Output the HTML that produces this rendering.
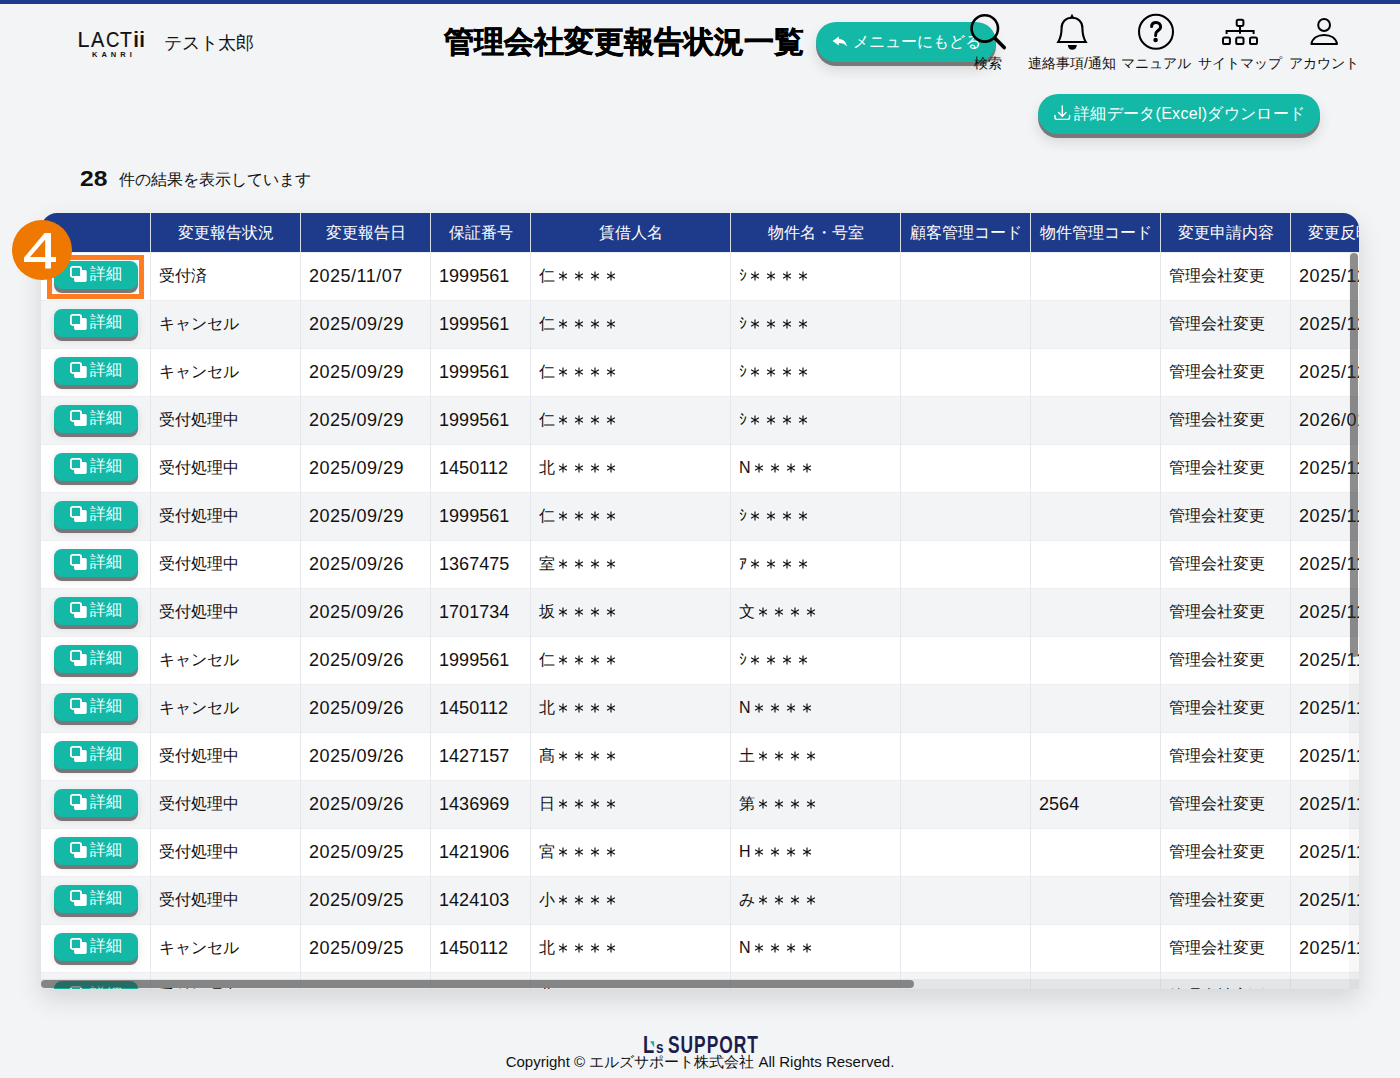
<!DOCTYPE html>
<html lang="ja">
<head>
<meta charset="utf-8">
<title>管理会社変更報告状況一覧</title>
<style>
*{box-sizing:border-box;margin:0;padding:0}
html,body{width:1400px;height:1078px;overflow:hidden}
body{position:relative;background:#f3f4f6;font-family:"Liberation Sans",sans-serif;color:#111}
.abs{position:absolute}
#topbar{left:0;top:0;width:1400px;height:4px;background:#1e3a8a}
#logo{left:79px;top:28px;font-size:21.5px;line-height:24px;color:#111;-webkit-text-stroke:0.2px #111}
#logo span{position:absolute;top:0;transform-origin:0 0}
#kanri{left:92px;top:49.5px;font-size:7.5px;font-weight:bold;letter-spacing:4px;line-height:9px;color:#111}
#uname{left:164px;top:31px;font-size:18px;line-height:24px;white-space:nowrap}
#title{left:444px;top:24px;font-size:30px;font-weight:bold;line-height:36px;white-space:nowrap;-webkit-text-stroke:0.5px #000;color:#000}
.gbtn{background:#14b8a6;color:#fff;border-radius:20px;box-shadow:0 4px 0 #787878,0 8px 14px rgba(0,0,0,.12);white-space:nowrap}
#menubtn{left:816px;top:22px;width:180px;height:40px}
#menubtn .t{position:absolute;left:37px;top:10px;font-size:16px;line-height:20px}
#dlbtn{left:1038px;top:94px;width:282px;height:40px}
#dlbtn .t{position:absolute;left:36px;top:9px;font-size:16px;line-height:22px;letter-spacing:0.3px}
.lbl{position:absolute;top:55px;width:100px;text-align:center;font-size:14px;line-height:16px;white-space:nowrap;color:#111}
#count{left:80px;top:166px;white-space:nowrap;height:26px}
#count b{position:absolute;left:0;top:0;font-size:22px;line-height:26px;transform:scaleX(1.12);transform-origin:0 0}
#count span{position:absolute;left:39px;top:4px;font-size:16px;line-height:20px}
#tablewrap{left:41px;top:213px;width:1318px;height:776px;border-radius:16px 16px 0 0;overflow:hidden;background:#fff;box-shadow:0 10px 26px rgba(0,0,0,.13)}
#thead{left:0;top:0;width:1400px;height:39px;background:#1e3a8a}
.th{position:absolute;top:0;height:39px;line-height:39px;text-align:center;color:#fff;font-size:16px;border-left:1px solid #d9dde6;white-space:nowrap;overflow:hidden}
.tr{position:absolute;left:0;width:1400px;height:48px;border-top:1px solid #eceef1}
.tr.odd{background:#fff}
.tr.even{background:#f3f4f6}
.td{position:absolute;top:-1px;height:48px;line-height:48px;padding-left:8px;font-size:16px;border-left:1px solid #e5e7eb;white-space:nowrap;overflow:hidden;color:#111}
.nb{border-left:none}
.td .n{font-size:18px;letter-spacing:0.05px}
.td .d{letter-spacing:0.5px}
.ast{vertical-align:-2px;position:relative;top:0.6px}
.dbtn{position:absolute;left:13px;top:9px;width:84px;height:28px;border-radius:8px;background:#14b8a6;color:#fff;box-shadow:0 4px 0 #787878,0 3px 8px rgba(0,0,0,.12);line-height:28px;font-size:16px}
.dbtn svg{position:absolute;left:16px;top:5px}
.dbtn span{position:absolute;left:36px;top:-1px}
#vsb{left:1308px;top:39px;width:10px;height:737px;background:rgba(0,0,0,.03)}
#vthumb{left:1309px;top:40px;width:8px;height:404px;border-radius:4px;background:rgba(55,55,55,.55)}
#hsb{left:0;top:766px;width:1318px;height:10px;background:rgba(0,0,0,.06)}
#hthumb{left:0;top:767px;width:873px;height:8px;border-radius:4px;background:rgba(55,55,55,.55)}
#badge{left:12px;top:220px;width:60px;height:60px;border-radius:30px;background:#ef7800;color:#fff;font-size:49px;line-height:60px;text-align:center}
#hl{left:47px;top:255px;width:97px;height:44px;border:5px solid #ff7d22}
#flogo{left:644px;top:1036px;height:20px;white-space:nowrap;color:#1b1e4b}
#copy{left:0;top:1053px;width:1400px;text-align:center;font-size:15px;line-height:18px;color:#111;white-space:nowrap}
</style>
</head>
<body>
<svg width="0" height="0" style="position:absolute"><defs><g id="a1" fill="none" stroke="#111" stroke-width="1.15"><path d="M8,3.5 V12.5 M4.1,5.75 L11.9,10.25 M4.1,10.25 L11.9,5.75"/></g><g id="a4"><use href="#a1"/><use href="#a1" x="16"/><use href="#a1" x="32"/><use href="#a1" x="48"/></g></defs></svg>
<div id="topbar" class="abs"></div>
<div id="logo" class="abs"><span style="left:-1.6px">L</span><span style="left:12.4px;transform:scaleX(0.92)">A</span><span style="left:26.8px;transform:scaleX(0.86)">C</span><span style="left:40.5px;transform:scaleX(0.9)">T</span><span style="left:54.2px;transform:scaleX(1.3)">i</span><span style="left:60.2px;transform:scaleX(1.3)">i</span></div>
<div id="kanri" class="abs">KANRI</div>
<div id="uname" class="abs">テスト太郎</div>
<div id="title" class="abs">管理会社変更報告状況一覧</div>
<div id="menubtn" class="abs gbtn"><div class="t">メニューにもどる</div></div>
<svg class="abs" style="left:0;top:0" width="1400" height="140" viewBox="0 0 1400 140">
 <!-- reply arrow -->
 <path d="M832.6,41 L838.9,36.6 L838.9,39.1 C843.3,39.1 846.3,42 846.9,46.6 C845,43.9 842.4,43 838.9,43 L838.9,45.4 Z" fill="#fff"/>
 <!-- search -->
 <circle cx="984.8" cy="28.4" r="13.2" fill="none" stroke="#000" stroke-width="2.6"/>
 <line x1="995" y1="38.2" x2="1004.2" y2="47.6" stroke="#000" stroke-width="3.6" stroke-linecap="round"/>
 <!-- bell -->
 <path d="M1058.2,42 C1060.6,38 1061.6,33.5 1061.6,28 C1061.6,21.6 1066,17.8 1072,17.8 C1078,17.8 1082.4,21.6 1082.4,28 C1082.4,33.5 1083.4,38 1085.8,42 Z" fill="none" stroke="#000" stroke-width="2.1" stroke-linejoin="miter"/>
 <path d="M1069.6,18.2 L1072,13.8 L1074.4,18.2 Z" fill="#000"/>
 <path d="M1067.8,45 A4.5,4.8 0 0 0 1076.8,45 Z" fill="#000"/>
 <!-- question -->
 <circle cx="1156" cy="31.8" r="17" fill="none" stroke="#000" stroke-width="2.1"/>
 <path d="M1151.6,26.6 C1151.6,23.9 1153.6,22.5 1156,22.5 C1158.6,22.5 1160.6,24.3 1160.6,26.8 C1160.6,29.3 1158.6,30.4 1157.2,31.3 C1156,32.1 1155.6,33.2 1155.6,35.4" fill="none" stroke="#000" stroke-width="3" stroke-linecap="round"/>
 <circle cx="1155.6" cy="40" r="2.3" fill="#000"/>
 <!-- sitemap -->
 <g fill="none" stroke="#000" stroke-width="2">
  <rect x="1236.7" y="19.7" width="6.7" height="6.2" rx="1.6"/>
  <rect x="1223" y="37.4" width="6.9" height="6.6" rx="1.6"/>
  <rect x="1236.2" y="37.4" width="7.3" height="6.6" rx="1.6"/>
  <rect x="1250" y="37.4" width="7" height="6.6" rx="1.6"/>
  <path d="M1240,26 V33.8 M1226.6,34 V31 H1253.6 V34"/>
 </g>
 <!-- account -->
 <circle cx="1324.1" cy="25" r="5.9" fill="none" stroke="#000" stroke-width="2"/>
 <path d="M1311.4,44 L1337,44 C1336,38.3 1331,35 1324.2,35 C1317.4,35 1312.4,38.3 1311.4,44 Z" fill="none" stroke="#000" stroke-width="2" stroke-linejoin="round"/>
</svg>
<div class="lbl" style="left:938px">検索</div>
<div class="lbl" style="left:1022px">連絡事項/通知</div>
<div class="lbl" style="left:1106px">マニュアル</div>
<div class="lbl" style="left:1190px">サイトマップ</div>
<div class="lbl" style="left:1274px">アカウント</div>
<div id="dlbtn" class="abs gbtn"><div class="t">詳細データ(Excel)ダウンロード</div></div>
<svg class="abs" style="left:0;top:0" width="1400" height="140" viewBox="0 0 1400 140">
 <g fill="none" stroke="#fff" stroke-width="1.4" stroke-linecap="round" stroke-linejoin="round">
  <path d="M1062.3,106 V116"/>
  <path d="M1058.6,112.6 L1062.3,116.3 L1066,112.6"/>
  <path d="M1055,115.5 V117.6 C1055,118.6 1055.8,119.4 1056.8,119.4 H1067.8 C1068.8,119.4 1069.6,118.6 1069.6,117.6 V115.5"/>
 </g>
</svg>
<div id="count" class="abs"><b>28</b><span>件の結果を表示しています</span></div>
<div id="tablewrap" class="abs">
<div id="thead" class="abs">
<div class="th nb" style="left:0px;width:109px"></div>
<div class="th" style="left:109px;width:150px">変更報告状況</div>
<div class="th" style="left:259px;width:130px">変更報告日</div>
<div class="th" style="left:389px;width:100px">保証番号</div>
<div class="th" style="left:489px;width:200px">賃借人名</div>
<div class="th" style="left:689px;width:170px">物件名・号室</div>
<div class="th" style="left:859px;width:130px">顧客管理コード</div>
<div class="th" style="left:989px;width:130px">物件管理コード</div>
<div class="th" style="left:1119px;width:130px">変更申請内容</div>
<div class="th" style="left:1249px;width:130px">変更反映日時</div>
</div>
<div class="tr odd" style="top:39px">
<div class="td nb" style="left:0px;width:109px"><div class="dbtn"><svg width="18" height="18" viewBox="0 0 18 18"><rect x="4.1" y="4" width="12.6" height="11.9" rx="1.6" fill="#fff"/><rect x="0.9" y="0.9" width="10.1" height="10.1" rx="1.8" fill="#14b8a6" stroke="#fff" stroke-width="1.8"/></svg><span>詳細</span></div></div>
<div class="td" style="left:109px;width:150px">受付済</div>
<div class="td" style="left:259px;width:130px"><span class="n d">2025/11/07</span></div>
<div class="td" style="left:389px;width:100px"><span class="n">1999561</span></div>
<div class="td" style="left:489px;width:200px">仁<svg class="ast" width="64" height="16" viewBox="0 0 64 16"><use href="#a4"/></svg></div>
<div class="td" style="left:689px;width:170px">ｼ<svg class="ast" width="64" height="16" viewBox="0 0 64 16"><use href="#a4"/></svg></div>
<div class="td" style="left:859px;width:130px"></div>
<div class="td" style="left:989px;width:130px"></div>
<div class="td" style="left:1119px;width:130px">管理会社変更</div>
<div class="td" style="left:1249px;width:130px"><span class="n d">2025/12/01</span></div>
</div>
<div class="tr even" style="top:87px">
<div class="td nb" style="left:0px;width:109px"><div class="dbtn"><svg width="18" height="18" viewBox="0 0 18 18"><rect x="4.1" y="4" width="12.6" height="11.9" rx="1.6" fill="#fff"/><rect x="0.9" y="0.9" width="10.1" height="10.1" rx="1.8" fill="#14b8a6" stroke="#fff" stroke-width="1.8"/></svg><span>詳細</span></div></div>
<div class="td" style="left:109px;width:150px">キャンセル</div>
<div class="td" style="left:259px;width:130px"><span class="n d">2025/09/29</span></div>
<div class="td" style="left:389px;width:100px"><span class="n">1999561</span></div>
<div class="td" style="left:489px;width:200px">仁<svg class="ast" width="64" height="16" viewBox="0 0 64 16"><use href="#a4"/></svg></div>
<div class="td" style="left:689px;width:170px">ｼ<svg class="ast" width="64" height="16" viewBox="0 0 64 16"><use href="#a4"/></svg></div>
<div class="td" style="left:859px;width:130px"></div>
<div class="td" style="left:989px;width:130px"></div>
<div class="td" style="left:1119px;width:130px">管理会社変更</div>
<div class="td" style="left:1249px;width:130px"><span class="n d">2025/12/01</span></div>
</div>
<div class="tr odd" style="top:135px">
<div class="td nb" style="left:0px;width:109px"><div class="dbtn"><svg width="18" height="18" viewBox="0 0 18 18"><rect x="4.1" y="4" width="12.6" height="11.9" rx="1.6" fill="#fff"/><rect x="0.9" y="0.9" width="10.1" height="10.1" rx="1.8" fill="#14b8a6" stroke="#fff" stroke-width="1.8"/></svg><span>詳細</span></div></div>
<div class="td" style="left:109px;width:150px">キャンセル</div>
<div class="td" style="left:259px;width:130px"><span class="n d">2025/09/29</span></div>
<div class="td" style="left:389px;width:100px"><span class="n">1999561</span></div>
<div class="td" style="left:489px;width:200px">仁<svg class="ast" width="64" height="16" viewBox="0 0 64 16"><use href="#a4"/></svg></div>
<div class="td" style="left:689px;width:170px">ｼ<svg class="ast" width="64" height="16" viewBox="0 0 64 16"><use href="#a4"/></svg></div>
<div class="td" style="left:859px;width:130px"></div>
<div class="td" style="left:989px;width:130px"></div>
<div class="td" style="left:1119px;width:130px">管理会社変更</div>
<div class="td" style="left:1249px;width:130px"><span class="n d">2025/12/01</span></div>
</div>
<div class="tr even" style="top:183px">
<div class="td nb" style="left:0px;width:109px"><div class="dbtn"><svg width="18" height="18" viewBox="0 0 18 18"><rect x="4.1" y="4" width="12.6" height="11.9" rx="1.6" fill="#fff"/><rect x="0.9" y="0.9" width="10.1" height="10.1" rx="1.8" fill="#14b8a6" stroke="#fff" stroke-width="1.8"/></svg><span>詳細</span></div></div>
<div class="td" style="left:109px;width:150px">受付処理中</div>
<div class="td" style="left:259px;width:130px"><span class="n d">2025/09/29</span></div>
<div class="td" style="left:389px;width:100px"><span class="n">1999561</span></div>
<div class="td" style="left:489px;width:200px">仁<svg class="ast" width="64" height="16" viewBox="0 0 64 16"><use href="#a4"/></svg></div>
<div class="td" style="left:689px;width:170px">ｼ<svg class="ast" width="64" height="16" viewBox="0 0 64 16"><use href="#a4"/></svg></div>
<div class="td" style="left:859px;width:130px"></div>
<div class="td" style="left:989px;width:130px"></div>
<div class="td" style="left:1119px;width:130px">管理会社変更</div>
<div class="td" style="left:1249px;width:130px"><span class="n d">2026/01/01</span></div>
</div>
<div class="tr odd" style="top:231px">
<div class="td nb" style="left:0px;width:109px"><div class="dbtn"><svg width="18" height="18" viewBox="0 0 18 18"><rect x="4.1" y="4" width="12.6" height="11.9" rx="1.6" fill="#fff"/><rect x="0.9" y="0.9" width="10.1" height="10.1" rx="1.8" fill="#14b8a6" stroke="#fff" stroke-width="1.8"/></svg><span>詳細</span></div></div>
<div class="td" style="left:109px;width:150px">受付処理中</div>
<div class="td" style="left:259px;width:130px"><span class="n d">2025/09/29</span></div>
<div class="td" style="left:389px;width:100px"><span class="n">1450112</span></div>
<div class="td" style="left:489px;width:200px">北<svg class="ast" width="64" height="16" viewBox="0 0 64 16"><use href="#a4"/></svg></div>
<div class="td" style="left:689px;width:170px">N<svg class="ast" width="64" height="16" viewBox="0 0 64 16"><use href="#a4"/></svg></div>
<div class="td" style="left:859px;width:130px"></div>
<div class="td" style="left:989px;width:130px"></div>
<div class="td" style="left:1119px;width:130px">管理会社変更</div>
<div class="td" style="left:1249px;width:130px"><span class="n d">2025/11/01</span></div>
</div>
<div class="tr even" style="top:279px">
<div class="td nb" style="left:0px;width:109px"><div class="dbtn"><svg width="18" height="18" viewBox="0 0 18 18"><rect x="4.1" y="4" width="12.6" height="11.9" rx="1.6" fill="#fff"/><rect x="0.9" y="0.9" width="10.1" height="10.1" rx="1.8" fill="#14b8a6" stroke="#fff" stroke-width="1.8"/></svg><span>詳細</span></div></div>
<div class="td" style="left:109px;width:150px">受付処理中</div>
<div class="td" style="left:259px;width:130px"><span class="n d">2025/09/29</span></div>
<div class="td" style="left:389px;width:100px"><span class="n">1999561</span></div>
<div class="td" style="left:489px;width:200px">仁<svg class="ast" width="64" height="16" viewBox="0 0 64 16"><use href="#a4"/></svg></div>
<div class="td" style="left:689px;width:170px">ｼ<svg class="ast" width="64" height="16" viewBox="0 0 64 16"><use href="#a4"/></svg></div>
<div class="td" style="left:859px;width:130px"></div>
<div class="td" style="left:989px;width:130px"></div>
<div class="td" style="left:1119px;width:130px">管理会社変更</div>
<div class="td" style="left:1249px;width:130px"><span class="n d">2025/11/01</span></div>
</div>
<div class="tr odd" style="top:327px">
<div class="td nb" style="left:0px;width:109px"><div class="dbtn"><svg width="18" height="18" viewBox="0 0 18 18"><rect x="4.1" y="4" width="12.6" height="11.9" rx="1.6" fill="#fff"/><rect x="0.9" y="0.9" width="10.1" height="10.1" rx="1.8" fill="#14b8a6" stroke="#fff" stroke-width="1.8"/></svg><span>詳細</span></div></div>
<div class="td" style="left:109px;width:150px">受付処理中</div>
<div class="td" style="left:259px;width:130px"><span class="n d">2025/09/26</span></div>
<div class="td" style="left:389px;width:100px"><span class="n">1367475</span></div>
<div class="td" style="left:489px;width:200px">室<svg class="ast" width="64" height="16" viewBox="0 0 64 16"><use href="#a4"/></svg></div>
<div class="td" style="left:689px;width:170px">ｱ<svg class="ast" width="64" height="16" viewBox="0 0 64 16"><use href="#a4"/></svg></div>
<div class="td" style="left:859px;width:130px"></div>
<div class="td" style="left:989px;width:130px"></div>
<div class="td" style="left:1119px;width:130px">管理会社変更</div>
<div class="td" style="left:1249px;width:130px"><span class="n d">2025/11/01</span></div>
</div>
<div class="tr even" style="top:375px">
<div class="td nb" style="left:0px;width:109px"><div class="dbtn"><svg width="18" height="18" viewBox="0 0 18 18"><rect x="4.1" y="4" width="12.6" height="11.9" rx="1.6" fill="#fff"/><rect x="0.9" y="0.9" width="10.1" height="10.1" rx="1.8" fill="#14b8a6" stroke="#fff" stroke-width="1.8"/></svg><span>詳細</span></div></div>
<div class="td" style="left:109px;width:150px">受付処理中</div>
<div class="td" style="left:259px;width:130px"><span class="n d">2025/09/26</span></div>
<div class="td" style="left:389px;width:100px"><span class="n">1701734</span></div>
<div class="td" style="left:489px;width:200px">坂<svg class="ast" width="64" height="16" viewBox="0 0 64 16"><use href="#a4"/></svg></div>
<div class="td" style="left:689px;width:170px">文<svg class="ast" width="64" height="16" viewBox="0 0 64 16"><use href="#a4"/></svg></div>
<div class="td" style="left:859px;width:130px"></div>
<div class="td" style="left:989px;width:130px"></div>
<div class="td" style="left:1119px;width:130px">管理会社変更</div>
<div class="td" style="left:1249px;width:130px"><span class="n d">2025/11/01</span></div>
</div>
<div class="tr odd" style="top:423px">
<div class="td nb" style="left:0px;width:109px"><div class="dbtn"><svg width="18" height="18" viewBox="0 0 18 18"><rect x="4.1" y="4" width="12.6" height="11.9" rx="1.6" fill="#fff"/><rect x="0.9" y="0.9" width="10.1" height="10.1" rx="1.8" fill="#14b8a6" stroke="#fff" stroke-width="1.8"/></svg><span>詳細</span></div></div>
<div class="td" style="left:109px;width:150px">キャンセル</div>
<div class="td" style="left:259px;width:130px"><span class="n d">2025/09/26</span></div>
<div class="td" style="left:389px;width:100px"><span class="n">1999561</span></div>
<div class="td" style="left:489px;width:200px">仁<svg class="ast" width="64" height="16" viewBox="0 0 64 16"><use href="#a4"/></svg></div>
<div class="td" style="left:689px;width:170px">ｼ<svg class="ast" width="64" height="16" viewBox="0 0 64 16"><use href="#a4"/></svg></div>
<div class="td" style="left:859px;width:130px"></div>
<div class="td" style="left:989px;width:130px"></div>
<div class="td" style="left:1119px;width:130px">管理会社変更</div>
<div class="td" style="left:1249px;width:130px"><span class="n d">2025/11/01</span></div>
</div>
<div class="tr even" style="top:471px">
<div class="td nb" style="left:0px;width:109px"><div class="dbtn"><svg width="18" height="18" viewBox="0 0 18 18"><rect x="4.1" y="4" width="12.6" height="11.9" rx="1.6" fill="#fff"/><rect x="0.9" y="0.9" width="10.1" height="10.1" rx="1.8" fill="#14b8a6" stroke="#fff" stroke-width="1.8"/></svg><span>詳細</span></div></div>
<div class="td" style="left:109px;width:150px">キャンセル</div>
<div class="td" style="left:259px;width:130px"><span class="n d">2025/09/26</span></div>
<div class="td" style="left:389px;width:100px"><span class="n">1450112</span></div>
<div class="td" style="left:489px;width:200px">北<svg class="ast" width="64" height="16" viewBox="0 0 64 16"><use href="#a4"/></svg></div>
<div class="td" style="left:689px;width:170px">N<svg class="ast" width="64" height="16" viewBox="0 0 64 16"><use href="#a4"/></svg></div>
<div class="td" style="left:859px;width:130px"></div>
<div class="td" style="left:989px;width:130px"></div>
<div class="td" style="left:1119px;width:130px">管理会社変更</div>
<div class="td" style="left:1249px;width:130px"><span class="n d">2025/11/01</span></div>
</div>
<div class="tr odd" style="top:519px">
<div class="td nb" style="left:0px;width:109px"><div class="dbtn"><svg width="18" height="18" viewBox="0 0 18 18"><rect x="4.1" y="4" width="12.6" height="11.9" rx="1.6" fill="#fff"/><rect x="0.9" y="0.9" width="10.1" height="10.1" rx="1.8" fill="#14b8a6" stroke="#fff" stroke-width="1.8"/></svg><span>詳細</span></div></div>
<div class="td" style="left:109px;width:150px">受付処理中</div>
<div class="td" style="left:259px;width:130px"><span class="n d">2025/09/26</span></div>
<div class="td" style="left:389px;width:100px"><span class="n">1427157</span></div>
<div class="td" style="left:489px;width:200px">髙<svg class="ast" width="64" height="16" viewBox="0 0 64 16"><use href="#a4"/></svg></div>
<div class="td" style="left:689px;width:170px">土<svg class="ast" width="64" height="16" viewBox="0 0 64 16"><use href="#a4"/></svg></div>
<div class="td" style="left:859px;width:130px"></div>
<div class="td" style="left:989px;width:130px"></div>
<div class="td" style="left:1119px;width:130px">管理会社変更</div>
<div class="td" style="left:1249px;width:130px"><span class="n d">2025/11/01</span></div>
</div>
<div class="tr even" style="top:567px">
<div class="td nb" style="left:0px;width:109px"><div class="dbtn"><svg width="18" height="18" viewBox="0 0 18 18"><rect x="4.1" y="4" width="12.6" height="11.9" rx="1.6" fill="#fff"/><rect x="0.9" y="0.9" width="10.1" height="10.1" rx="1.8" fill="#14b8a6" stroke="#fff" stroke-width="1.8"/></svg><span>詳細</span></div></div>
<div class="td" style="left:109px;width:150px">受付処理中</div>
<div class="td" style="left:259px;width:130px"><span class="n d">2025/09/26</span></div>
<div class="td" style="left:389px;width:100px"><span class="n">1436969</span></div>
<div class="td" style="left:489px;width:200px">日<svg class="ast" width="64" height="16" viewBox="0 0 64 16"><use href="#a4"/></svg></div>
<div class="td" style="left:689px;width:170px">第<svg class="ast" width="64" height="16" viewBox="0 0 64 16"><use href="#a4"/></svg></div>
<div class="td" style="left:859px;width:130px"></div>
<div class="td" style="left:989px;width:130px"><span class="n">2564</span></div>
<div class="td" style="left:1119px;width:130px">管理会社変更</div>
<div class="td" style="left:1249px;width:130px"><span class="n d">2025/11/01</span></div>
</div>
<div class="tr odd" style="top:615px">
<div class="td nb" style="left:0px;width:109px"><div class="dbtn"><svg width="18" height="18" viewBox="0 0 18 18"><rect x="4.1" y="4" width="12.6" height="11.9" rx="1.6" fill="#fff"/><rect x="0.9" y="0.9" width="10.1" height="10.1" rx="1.8" fill="#14b8a6" stroke="#fff" stroke-width="1.8"/></svg><span>詳細</span></div></div>
<div class="td" style="left:109px;width:150px">受付処理中</div>
<div class="td" style="left:259px;width:130px"><span class="n d">2025/09/25</span></div>
<div class="td" style="left:389px;width:100px"><span class="n">1421906</span></div>
<div class="td" style="left:489px;width:200px">宮<svg class="ast" width="64" height="16" viewBox="0 0 64 16"><use href="#a4"/></svg></div>
<div class="td" style="left:689px;width:170px">H<svg class="ast" width="64" height="16" viewBox="0 0 64 16"><use href="#a4"/></svg></div>
<div class="td" style="left:859px;width:130px"></div>
<div class="td" style="left:989px;width:130px"></div>
<div class="td" style="left:1119px;width:130px">管理会社変更</div>
<div class="td" style="left:1249px;width:130px"><span class="n d">2025/11/01</span></div>
</div>
<div class="tr even" style="top:663px">
<div class="td nb" style="left:0px;width:109px"><div class="dbtn"><svg width="18" height="18" viewBox="0 0 18 18"><rect x="4.1" y="4" width="12.6" height="11.9" rx="1.6" fill="#fff"/><rect x="0.9" y="0.9" width="10.1" height="10.1" rx="1.8" fill="#14b8a6" stroke="#fff" stroke-width="1.8"/></svg><span>詳細</span></div></div>
<div class="td" style="left:109px;width:150px">受付処理中</div>
<div class="td" style="left:259px;width:130px"><span class="n d">2025/09/25</span></div>
<div class="td" style="left:389px;width:100px"><span class="n">1424103</span></div>
<div class="td" style="left:489px;width:200px">小<svg class="ast" width="64" height="16" viewBox="0 0 64 16"><use href="#a4"/></svg></div>
<div class="td" style="left:689px;width:170px">み<svg class="ast" width="64" height="16" viewBox="0 0 64 16"><use href="#a4"/></svg></div>
<div class="td" style="left:859px;width:130px"></div>
<div class="td" style="left:989px;width:130px"></div>
<div class="td" style="left:1119px;width:130px">管理会社変更</div>
<div class="td" style="left:1249px;width:130px"><span class="n d">2025/11/01</span></div>
</div>
<div class="tr odd" style="top:711px">
<div class="td nb" style="left:0px;width:109px"><div class="dbtn"><svg width="18" height="18" viewBox="0 0 18 18"><rect x="4.1" y="4" width="12.6" height="11.9" rx="1.6" fill="#fff"/><rect x="0.9" y="0.9" width="10.1" height="10.1" rx="1.8" fill="#14b8a6" stroke="#fff" stroke-width="1.8"/></svg><span>詳細</span></div></div>
<div class="td" style="left:109px;width:150px">キャンセル</div>
<div class="td" style="left:259px;width:130px"><span class="n d">2025/09/25</span></div>
<div class="td" style="left:389px;width:100px"><span class="n">1450112</span></div>
<div class="td" style="left:489px;width:200px">北<svg class="ast" width="64" height="16" viewBox="0 0 64 16"><use href="#a4"/></svg></div>
<div class="td" style="left:689px;width:170px">N<svg class="ast" width="64" height="16" viewBox="0 0 64 16"><use href="#a4"/></svg></div>
<div class="td" style="left:859px;width:130px"></div>
<div class="td" style="left:989px;width:130px"></div>
<div class="td" style="left:1119px;width:130px">管理会社変更</div>
<div class="td" style="left:1249px;width:130px"><span class="n d">2025/11/01</span></div>
</div>
<div class="tr even" style="top:759px">
<div class="td nb" style="left:0px;width:109px"><div class="dbtn"><svg width="18" height="18" viewBox="0 0 18 18"><rect x="4.1" y="4" width="12.6" height="11.9" rx="1.6" fill="#fff"/><rect x="0.9" y="0.9" width="10.1" height="10.1" rx="1.8" fill="#14b8a6" stroke="#fff" stroke-width="1.8"/></svg><span>詳細</span></div></div>
<div class="td" style="left:109px;width:150px">受付処理中</div>
<div class="td" style="left:259px;width:130px"><span class="n d">2025/09/25</span></div>
<div class="td" style="left:389px;width:100px"><span class="n">1450112</span></div>
<div class="td" style="left:489px;width:200px">北<svg class="ast" width="64" height="16" viewBox="0 0 64 16"><use href="#a4"/></svg></div>
<div class="td" style="left:689px;width:170px">N<svg class="ast" width="64" height="16" viewBox="0 0 64 16"><use href="#a4"/></svg></div>
<div class="td" style="left:859px;width:130px"></div>
<div class="td" style="left:989px;width:130px"></div>
<div class="td" style="left:1119px;width:130px">管理会社変更</div>
<div class="td" style="left:1249px;width:130px"><span class="n d">2025/11/01</span></div>
</div>
<div id="vsb" class="abs"></div>
<div id="vthumb" class="abs"></div>
<div id="hsb" class="abs"></div>
<div id="hthumb" class="abs"></div>
</div>
<div id="hl" class="abs"></div>
<div id="badge" class="abs"></div>
<svg class="abs" style="left:0;top:200px" width="100" height="100" viewBox="0 200 100 100"><path fill="#fff" fill-rule="evenodd" d="M44.6,233 H51 V257 H56 V262.1 H51 V268.4 H45.2 V262.1 H24 V257.6 Z M45.2,239.6 V257 H30 Z"/></svg>
<div id="flogo" class="abs">
 <span style="position:absolute;left:-1.5px;top:-1px;font-size:23.5px;font-weight:bold;line-height:20px;transform:scaleX(0.78);transform-origin:0 0">L</span>
 <svg style="position:absolute;left:6px;top:5px" width="5" height="7" viewBox="0 0 5 7"><path d="M0,0.2 H4.2 V6.6 Z" fill="#19b3a3"/></svg>
 <span style="position:absolute;left:11.5px;top:2px;font-size:17px;font-weight:bold;line-height:20px;transform:scaleX(0.8);transform-origin:0 0">s</span>
 <span style="position:absolute;left:24px;top:-1px;font-size:23.5px;font-weight:bold;line-height:20px;letter-spacing:1.3px;transform:scaleX(0.74);transform-origin:0 0">SUPPORT</span>
</div>
<div id="copy" class="abs">Copyright © エルズサポート株式会社 All Rights Reserved.</div>
</body>
</html>
